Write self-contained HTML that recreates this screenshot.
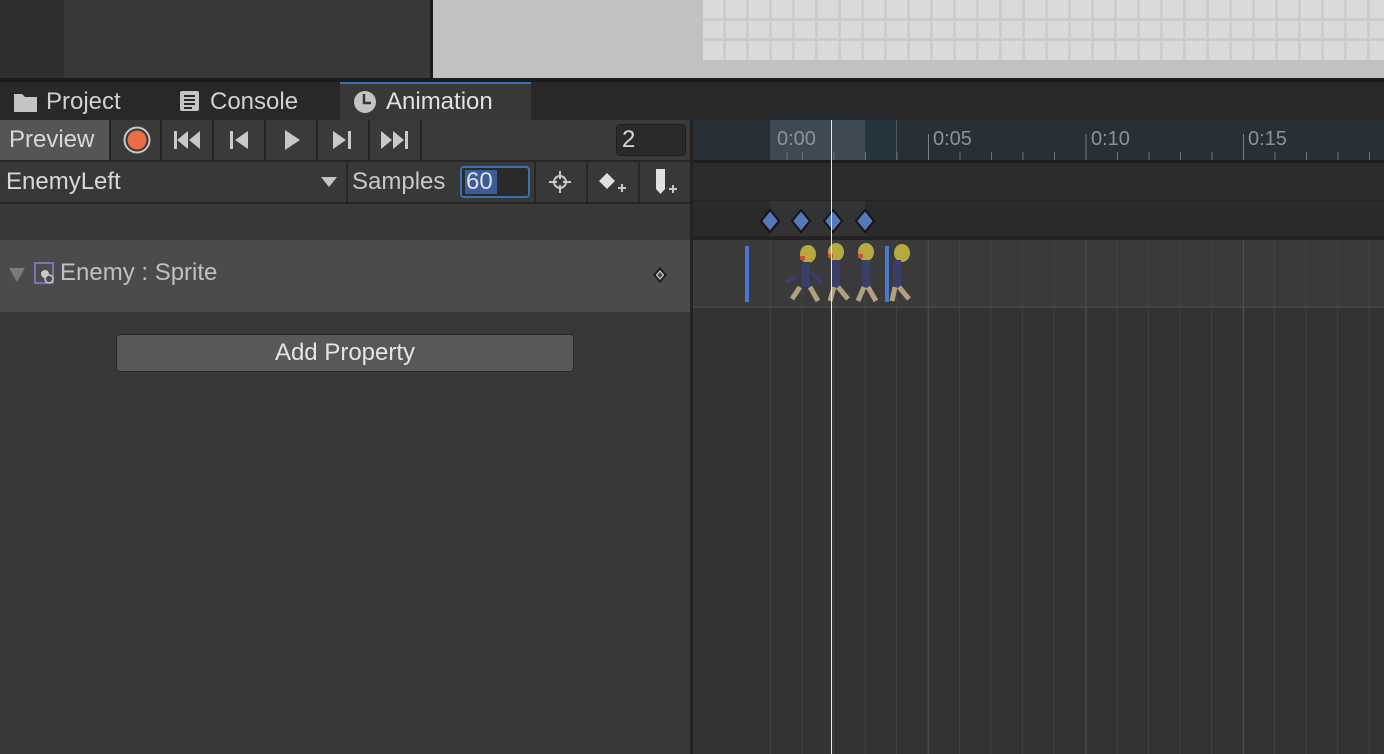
<!DOCTYPE html>
<html><head><meta charset="utf-8"><style>
*{margin:0;padding:0;box-sizing:border-box}
body{width:1384px;height:754px;overflow:hidden;background:#383838;font-family:"Liberation Sans",sans-serif;position:relative;color:#d2d2d2}
div{position:absolute}
.t{font-size:24px;white-space:nowrap}
.btn{top:120px;height:40px;border-right:2px solid #262626;background:#3a3a3a}
.lbl{font-size:20px;color:#8a9298;top:128px}
</style></head><body>
<div style="left:0;top:0;width:64px;height:78px;background:#2f2f2f"></div>
<div style="left:64px;top:0;width:366px;height:78px;background:#383838"></div>
<div style="left:430px;top:0;width:3px;height:78px;background:#1a1a1a"></div>
<div style="left:433px;top:0;width:951px;height:78px;background:#c1c1c1"></div>
<div style="left:703px;top:0;width:681px;height:60px;background:repeating-linear-gradient(90deg,#dadada 0 20px,#cdcdcd 20px 23px);"></div>
<div style="left:703px;top:18px;width:681px;height:3px;background:#cccccc"></div>
<div style="left:703px;top:38px;width:681px;height:3px;background:#cccccc"></div>
<div style="left:0;top:78px;width:1384px;height:4px;background:#1b1b1b"></div>
<div style="left:0;top:82px;width:1384px;height:38px;background:#282828"></div>
<div style="left:340px;top:82px;width:191px;height:38px;background:#383838;border-top:2px solid #3a72b0"></div>
<svg style="position:absolute;left:14px;top:92px" width="24" height="20"><path d="M0 2h8l3 3h12v15H0z" fill="#c4c4c4"/></svg>
<div class="t" style="left:46px;top:88px;color:#d0d0d0">Project</div>
<svg style="position:absolute;left:179px;top:90px" width="22" height="22"><rect x="1" y="1" width="19" height="20" rx="2" fill="#c4c4c4"/><path d="M5 6h11M5 10h11M5 14h11M5 18h8" stroke="#282828" stroke-width="2"/></svg>
<div class="t" style="left:210px;top:88px;color:#d0d0d0">Console</div>
<svg style="position:absolute;left:353px;top:90px" width="24" height="24"><circle cx="12" cy="12" r="11" fill="#c4c4c4"/><path d="M11 4v9h7" stroke="#383838" stroke-width="2.5" fill="none"/></svg>
<div class="t" style="left:386px;top:88px;color:#e0e0e0">Animation</div>
<div style="left:0;top:120px;width:692px;height:42px;background:#3a3a3a;border-bottom:2px solid #262626"></div>
<div class="btn" style="left:0;width:111px;background:#555"></div>
<div class="t" style="left:9px;top:126px;color:#d8d8d8">Preview</div>
<div class="btn" style="left:111px;width:51px"></div>
<svg style="position:absolute;left:122px;top:125px" width="30" height="30"><circle cx="15" cy="15" r="12.5" fill="none" stroke="#c8c8c8" stroke-width="2"/><circle cx="15" cy="15" r="9.5" fill="#ec6d42"/></svg>
<div class="btn" style="left:162px;width:52px"></div>
<svg style="position:absolute;left:174px;top:131px" width="30" height="18"><rect x="0" y="0" width="3" height="18" fill="#c8c8c8"/><path d="M14 0v18L3 9zM26 0v18L15 9z" fill="#c8c8c8"/></svg>
<div class="btn" style="left:214px;width:52px"></div>
<svg style="position:absolute;left:230px;top:131px" width="22" height="18"><rect x="0" y="0" width="3" height="18" fill="#c8c8c8"/><path d="M18 0v18L5 9z" fill="#c8c8c8"/></svg>
<div class="btn" style="left:266px;width:52px"></div>
<svg style="position:absolute;left:284px;top:130px" width="18" height="20"><path d="M1 0v20l15-10z" fill="#c8c8c8"/></svg>
<div class="btn" style="left:318px;width:52px"></div>
<svg style="position:absolute;left:333px;top:131px" width="22" height="18"><path d="M0 0v18l13-9z" fill="#c8c8c8"/><rect x="15" y="0" width="3" height="18" fill="#c8c8c8"/></svg>
<div class="btn" style="left:370px;width:52px"></div>
<svg style="position:absolute;left:381px;top:131px" width="30" height="18"><path d="M0 0v18l11-9zM12 0v18l11-9z" fill="#c8c8c8"/><rect x="24" y="0" width="3" height="18" fill="#c8c8c8"/></svg>
<div style="left:616px;top:124px;width:70px;height:32px;background:#2a2a2a;border:1px solid #1e1e1e;border-radius:4px"></div>
<div class="t" style="left:622px;top:126px;color:#d8d8d8">2</div>
<div style="left:0;top:162px;width:692px;height:42px;background:#383838;border-bottom:2px solid #262626"></div>
<div class="t" style="left:6px;top:168px;color:#d8d8d8">EnemyLeft</div>
<svg style="position:absolute;left:321px;top:177px" width="16" height="11"><path d="M0 0h16L8 10z" fill="#c4c4c4"/></svg>
<div style="left:346px;top:162px;width:2px;height:40px;background:#262626"></div>
<div class="t" style="left:352px;top:168px;color:#c8c8c8">Samples</div>
<div style="left:460px;top:166px;width:70px;height:32px;background:#2a2a2a;border:2px solid #3a72b0;border-radius:4px"></div>
<div style="left:465px;top:170px;width:32px;height:24px;background:#3a5d9a"></div>
<div class="t" style="left:466px;top:168px;color:#e0e0e0">60</div>
<div style="left:534px;top:162px;width:2px;height:40px;background:#262626"></div>
<div style="left:586px;top:162px;width:2px;height:40px;background:#262626"></div>
<div style="left:638px;top:162px;width:2px;height:40px;background:#262626"></div>
<svg style="position:absolute;left:548px;top:170px" width="24" height="24"><circle cx="12" cy="12" r="6" fill="none" stroke="#c8c8c8" stroke-width="2"/><path d="M12 1v22M1 12h22" stroke="#c8c8c8" stroke-width="2"/><circle cx="12" cy="12" r="3" fill="#383838"/></svg>
<svg style="position:absolute;left:598px;top:172px" width="30" height="24"><path d="M9 1l8 8-8 8-8-8z" fill="#e0e0e0"/><path d="M20 16h8M24 12v8" stroke="#c8c8c8" stroke-width="2"/></svg>
<svg style="position:absolute;left:653px;top:168px" width="28" height="30"><path d="M3 1h9v20l-4.5 5-4.5-5z" fill="#e0e0e0"/><path d="M16 21h8M20 17v8" stroke="#c8c8c8" stroke-width="2"/></svg>
<div style="left:0;top:240px;width:692px;height:72px;background:#4b4b4b"></div>
<svg style="position:absolute;left:9px;top:268px" width="16" height="14"><path d="M0 0h16L8 14z" fill="#7a7a7a"/></svg>
<svg style="position:absolute;left:34px;top:262px" width="22" height="24"><rect x="1" y="1" width="18" height="20" fill="none" stroke="#9a7ad8" stroke-width="1.5"/><circle cx="11" cy="12" r="4" fill="#c8c8c8"/><circle cx="15" cy="17" r="4" fill="#4b4b4b" stroke="#c8c8c8" stroke-width="1.5"/></svg>
<div class="t" style="left:60px;top:259px;color:#c0c0c0">Enemy : Sprite</div>
<svg style="position:absolute;left:652px;top:266px" width="16" height="18"><path d="M8 1l7 8-7 8-7-8z" fill="#1e1e1e"/><path d="M8 5l3.5 4-3.5 4-3.5-4z" fill="#4b4b4b" stroke="#d0d0d0" stroke-width="1.2"/></svg>
<div style="left:116px;top:334px;width:458px;height:38px;background:#585858;border:1px solid #2a2a2a;border-radius:4px"></div>
<div class="t" style="left:116px;top:339px;width:458px;text-align:center;color:#e4e4e4">Add Property</div>
<div style="left:690px;top:120px;width:3px;height:634px;background:#232323"></div>
<div style="left:693px;top:120px;width:691px;height:40px;background:#283036"></div>
<div style="left:770px;top:120px;width:95px;height:40px;background:#3e4a53"></div>
<div style="left:865px;top:120px;width:31px;height:40px;background:#26343e"></div>
<div style="left:896px;top:120px;width:1px;height:40px;background:#4a5560"></div>
<div style="left:770px;top:152px;width:614px;height:8px;background:repeating-linear-gradient(90deg,#6a737a 0 1px,transparent 1px 31.5px);background-position:32px 0"></div>
<div style="left:928px;top:134px;width:456px;height:26px;background:repeating-linear-gradient(90deg,#7a8288 0 1px,transparent 1px 157.5px)"></div>
<div class="lbl" style="left:777px">0:00</div>
<div class="lbl" style="left:933px">0:05</div>
<div class="lbl" style="left:1091px">0:10</div>
<div class="lbl" style="left:1248px">0:15</div>
<div style="left:693px;top:160px;width:691px;height:3px;background:#1e1e1e"></div>
<div style="left:693px;top:163px;width:691px;height:37px;background:#2c2c2c"></div>
<div style="left:693px;top:200px;width:691px;height:38px;background:#2a2a2a;border-top:1px solid #242424"></div>
<div style="left:770px;top:201px;width:95px;height:37px;background:#333"></div>
<div style="left:693px;top:236px;width:691px;height:4px;background:#232323"></div>
<div style="left:693px;top:240px;width:691px;height:514px;background:#333"></div>
<div style="left:693px;top:240px;width:691px;height:68px;background:#3a3a3a;border-bottom:2px solid #444"></div>
<div style="left:770px;top:240px;width:614px;height:514px;background:repeating-linear-gradient(90deg,#414141 0 1px,transparent 1px 31.5px)"></div>
<div style="left:928px;top:240px;width:456px;height:514px;background:repeating-linear-gradient(90deg,#4c4c4c 0 1px,transparent 1px 157.5px)"></div>
<svg style="position:absolute;left:758px;top:208px" width="120" height="26">
<g fill="#5578b8" stroke="#151515" stroke-width="2">
<path d="M12 2l9 11-9 11-9-11z"/><path d="M43 2l9 11-9 11-9-11z"/><path d="M75 2l9 11-9 11-9-11z"/><path d="M107 2l9 11-9 11-9-11z"/></g></svg>
<div style="left:745px;top:246px;width:4px;height:56px;background:#4a78d0"></div>
<div style="left:885px;top:246px;width:4px;height:56px;background:#4a78d0"></div>
<svg style="position:absolute;left:778px;top:242px" width="155" height="65">
<g>
<ellipse cx="30" cy="12" rx="8" ry="9" fill="#b8a840"/><rect x="22" y="14" width="5" height="4" fill="#d05030"/><rect x="24" y="20" width="8" height="25" fill="#3a3f6a"/><path d="M18 35l-10 5M34 30l10 12" stroke="#3a3f6a" stroke-width="4"/><path d="M22 45l-8 12M32 45l8 14" stroke="#b0a080" stroke-width="5"/>
<ellipse cx="58" cy="10" rx="8" ry="9" fill="#b8a840"/><rect x="50" y="12" width="5" height="4" fill="#d05030"/><rect x="54" y="18" width="8" height="27" fill="#3a3f6a"/><path d="M56 45l-4 14M60 45l10 12" stroke="#b0a080" stroke-width="5"/>
<ellipse cx="88" cy="10" rx="8" ry="9" fill="#b8a840"/><rect x="80" y="12" width="5" height="4" fill="#d05030"/><rect x="84" y="18" width="8" height="27" fill="#3a3f6a"/><path d="M86 45l-6 14M90 45l8 14" stroke="#b0a080" stroke-width="5"/>
<ellipse cx="124" cy="11" rx="8" ry="9" fill="#b8a840"/><rect x="115" y="18" width="8" height="27" fill="#3a3f6a"/><path d="M117 45l-3 14M121 45l10 12" stroke="#b0a080" stroke-width="5"/>
</g></svg>
<div style="left:831px;top:120px;width:1px;height:634px;background:#e8e8e8"></div>
</body></html>
